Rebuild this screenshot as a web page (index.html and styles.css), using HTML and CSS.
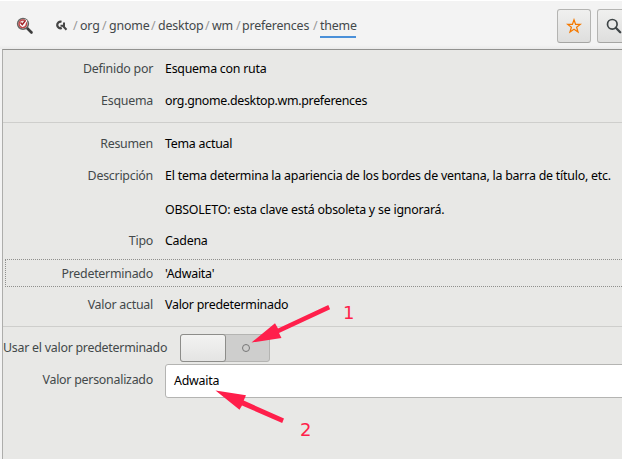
FILE: index.html
```
<!DOCTYPE html>
<html lang="es">
<head>
<meta charset="utf-8">
<title>theme</title>
<link rel="stylesheet" href="styles.css">
</head>
<body>
<header class="bar">
  <svg class="logo" width="18" height="18" viewBox="0 0 18 18">
    <path d="M10.500 10.500l5 5" stroke="#3c3c3c" stroke-width="2.600" stroke-linecap="round"/>
    <circle cx="7" cy="6.800" r="5.400" fill="#ece5e4" stroke="#666664" stroke-width="1.500"/>
    <circle cx="6.800" cy="6.800" r="3.700" fill="none" stroke="#c04446" stroke-width="1.500"/>
    <path d="M4.500 6.200l2.100 2.200L10.500 3" fill="none" stroke="#fff" stroke-width="2.500"/>
    <path d="M4.500 5.600l1.800 2L9.600 3.300" fill="none" stroke="#a11d22" stroke-width="1.500"/>
  </svg>
  <svg class="root" width="13" height="12" viewBox="0 0 13 12">
    <path d="M6.500 1.800A3.300 3.300 0 1 0 6.800 8" fill="none" stroke="#454545" stroke-width="2.300"/>
    <path d="M5.500 5.800h3.500V2.500M8 6l3.500 3.800" fill="none" stroke="#454545" stroke-width="2"/>
  </svg>
  <nav class="path">
    <i>/</i><span>org</span><i>/</i><span>gnome</span><i>/</i><span>desktop</span><i>/</i><span>wm</span><i>/</i><span>preferences</span><i>/</i><span class="current">theme</span>
  </nav>
  <div class="button star"><svg width="16" height="16" viewBox="0 0 16 16"><path d="M8 1.800l1.600 4.600h4.700l-3.700 2.900 1.400 4.700L8 11.200 4 14l1.400-4.700L1.700 6.400h4.700z" fill="none" stroke="#f57900" stroke-width="1.250"/></svg></div>
  <div class="button search"><svg width="16" height="16" viewBox="0 0 16 16"><circle cx="6.300" cy="6.300" r="4.800" fill="none" stroke="#3e4446" stroke-width="1.700"/><path d="M9.800 9.800l4.400 4.400" stroke="#3e4446" stroke-width="2.300" stroke-linecap="round"/></svg></div>
</header>
<main class="panel">
  <section class="group">
    <div class="row"><label>Definido por</label><p>Esquema con ruta</p></div>
    <div class="row"><label>Esquema</label><p class="path-name">org.gnome.desktop.wm.preferences</p></div>
  </section>
  <section class="group">
    <div class="row"><label>Resumen</label><p>Tema actual</p></div>
    <div class="row"><label>Descripción</label><p class="prose">El tema determina la apariencia de los bordes de ventana, la barra de título, etc.<br><br>OBSOLETO: esta clave está obsoleta y se ignorará.</p></div>
    <div class="row kind"><label>Tipo</label><p>Cadena</p></div>
    <div class="row focused"><label>Predeterminado</label><p>'Adwaita'</p></div>
    <div class="row"><label>Valor actual</label><p>Valor predeterminado</p></div>
  </section>
  <section class="edit">
    <div class="toggle-row"><label>Usar el valor predeterminado</label><div class="switch"><div class="knob"></div><div class="off"></div></div></div>
    <div class="entry-row"><label>Valor personalizado</label><div class="entry">Adwaita</div></div>
  </section>
</main>
<svg class="notes" width="622" height="459" viewBox="0 0 622 459">
  <g fill="#ff1f4b">
    <path d="M251.500 342.500L275 323.300l3 5.200L328.300 305l1.800 4.200L279 333l2.500 5z"/>
    <path d="M215.500 390.500L246 395.300l-2.300 5.200L284 418.600l-1.800 4.400L242 405.500l-2.500 4.300z"/>
    <text x="343" y="319">1</text>
    <text x="300" y="436">2</text>
  </g>
</svg>
</body>
</html>
```

FILE: styles.css
```
* { box-sizing: border-box; }
body {
  margin: 0;
  width: 622px;
  height: 459px;
  overflow: hidden;
  background: #f3f3f3;
  font: 12.4px/17px "Noto Sans", sans-serif;
  letter-spacing: -0.25px;
  color: #000;
}
p { margin: 0; white-space: nowrap; }
label { color: #43484a; white-space: nowrap; }
.path-name { letter-spacing: -0.31px; }
.prose { letter-spacing: -0.22px; }
.bar {
  display: flex;
  height: 49px;
  border-top: 1px solid #fff;
  background: linear-gradient(#f3f3f3 44px, #e9e9e9);
}
.logo { flex: none; margin: 16px 0 0 16px; }
.root { flex: none; margin: 19px 0 0 21px; }
.path {
  display: grid;
  grid-template-columns: 7px 22px 7px 42px 7px 47px 7px 24px 6px 71px 7px 36px;
  width: 283px;
  height: 20px;
  margin: 16px 0 0 5px;
  color: #43484a;
  white-space: nowrap;
  letter-spacing: -0.18px;
}
.path i { font-style: normal; color: #999; }
.path .current { height: 21px; border-bottom: 2px solid #4a90d9; }
.button {
  flex: none;
  width: 34px;
  height: 34px;
  margin-top: 8px;
  border: 1px solid #b4b4b2;
  border-bottom-color: #a5a5a3;
  border-radius: 3px;
  background: linear-gradient(#f0f0ef, #dededd);
  display: flex;
  align-items: center;
  justify-content: center;
}
.star { margin-left: 201px; }
.search { margin-left: 6px; }
.panel {
  height: 410px;
  margin-left: 2px;
  border-top: 1px solid #91918f;
  border-left: 1px solid #adadab;
  background: #e8e8e6;
}
.group { border-bottom: 1px solid #cececc; padding: 3px 0 5px; }
.group + .group { padding: 5px 0 5px; }
.row {
  display: grid;
  grid-template-columns: 148px 1fr;
  column-gap: 12px;
  padding: 7px 0 8px 2px;
}
.group .row label { text-align: right; }
.kind { padding: 6px 0 9px 2px; }
.focused {
  height: 28px;
  margin: 1px -2px 2px 2px;
  padding: 5px 0 0;
  grid-template-columns: 147px 1fr;
  border: 1px dotted #8f8f8d;
}
.edit { padding-top: 7px; }
.toggle-row { display: flex; height: 30px; }
.toggle-row label { width: 165px; margin: 5px 12px 0 0; }
.switch {
  width: 90px;
  height: 28px;
  display: flex;
  border: 1px solid #b4b4b2;
  border-radius: 3px;
  background: #cececd;
}
.knob {
  width: 46px;
  height: 28px;
  margin: -1px 0 0 -1px;
  border: 1px solid #8d8d8a;
  border-radius: 3px;
  background: linear-gradient(#f3f3f2, #e4e4e3);
}
.off { width: 8px; height: 8px; margin: 9px 0 0 16px; border: 1px solid #777; border-radius: 50%; }
.entry-row { display: flex; }
.entry-row label { width: 150px; text-align: right; margin: 7px 12px 0 0; }
.entry {
  flex: 1;
  height: 34px;
  margin-right: -6px;
  padding: 7px 8px;
  border: 1px solid #b4b4b2;
  border-radius: 3px;
  background: #fff;
}
.notes { position: absolute; left: 0; top: 0; letter-spacing: 0; }
.notes text { font: 18px "DejaVu Sans", sans-serif; }
```
